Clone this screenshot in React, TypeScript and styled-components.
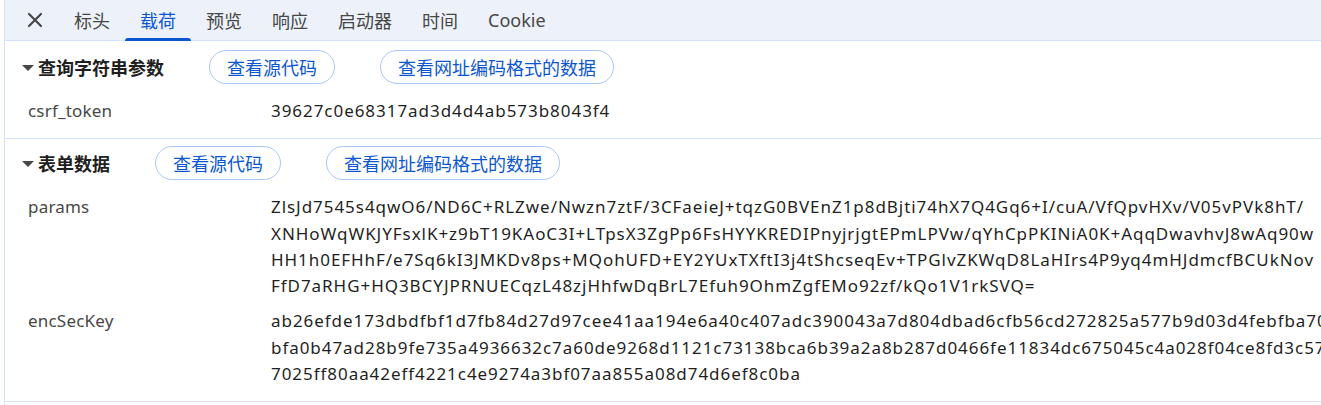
import React from 'react';
import styled, { createGlobalStyle } from 'styled-components';

const GlobalStyle = createGlobalStyle`
  html, body {
    margin: 0;
    padding: 0;
    background: #ffffff;
    overflow: hidden;
  }
  body {
    font-family: "Noto Sans", "Noto Sans CJK SC", sans-serif;
    color: #1f1f1f;
  }
`;

interface Param {
  name: string;
  lines: string[];
}

interface Section {
  title: string;
  params: Param[];
}

const sections: Section[] = [
  {
    title: '查询字符串参数',
    params: [{ name: 'csrf_token', lines: ['39627c0e68317ad3d4d4ab573b8043f4'] }],
  },
  {
    title: '表单数据',
    params: [
      {
        name: 'params',
        lines: [
          'ZlsJd7545s4qwO6/ND6C+RLZwe/Nwzn7ztF/3CFaeieJ+tqzG0BVEnZ1p8dBjti74hX7Q4Gq6+I/cuA/VfQpvHXv/V05vPVk8hT/',
          'XNHoWqWKJYFsxlK+z9bT19KAoC3I+LTpsX3ZgPp6FsHYYKREDIPnyjrjgtEPmLPVw/qYhCpPKINiA0K+AqqDwavhvJ8wAq90w',
          'HH1h0EFHhF/e7Sq6kI3JMKDv8ps+MQohUFD+EY2YUxTXftI3j4tShcseqEv+TPGlvZKWqD8LaHIrs4P9yq4mHJdmcfBCUkNov',
          'FfD7aRHG+HQ3BCYJPRNUECqzL48zjHhfwDqBrL7Efuh9OhmZgfEMo92zf/kQo1V1rkSVQ=',
        ],
      },
      {
        name: 'encSecKey',
        lines: [
          'ab26efde173dbdfbf1d7fb84d27d97cee41aa194e6a40c407adc390043a7d804dbad6cfb56cd272825a577b9d03d4febfba705',
          'bfa0b47ad28b9fe735a4936632c7a60de9268d1121c73138bca6b39a2a8b287d0466fe11834dc675045c4a028f04ce8fd3c57b',
          '7025ff80aa42eff4221c4e9274a3bf07aa855a08d74d6ef8c0ba',
        ],
      },
    ],
  },
];

const tabs = ['标头', '载荷', '预览', '响应', '启动器', '时间', 'Cookie'];

const Panel = styled.div`
  margin-left: 4px;
  border-left: 1px solid #d3e3fd;
  height: 405px;
  overflow: hidden;
`;

const TabBar = styled.div`
  display: flex;
  align-items: stretch;
  height: 40px;
  background: #edf2fa;
  border-bottom: 1px solid #d3e3fd;
  padding-left: 15px;
`;

const CloseButton = styled.div`
  display: flex;
  align-items: center;
  justify-content: center;
  box-sizing: border-box;
  width: 39px;
  padding-right: 9px;
`;

const Tab = styled.div<{ $active?: boolean }>`
  position: relative;
  display: flex;
  align-items: center;
  padding: 0 15px;
  font-size: 18px;
  color: ${p => (p.$active ? '#0b57d0' : '#474747')};

  &::after {
    content: '';
    display: ${p => (p.$active ? 'block' : 'none')};
    position: absolute;
    left: 0;
    right: 0;
    bottom: -1px;
    height: 3px;
    border-radius: 3px 3px 0 0;
    background: #0b57d0;
  }
`;

const SectionBox = styled.section<{ $first?: boolean }>`
  border-bottom: 1px solid #d3e3fd;
  padding: ${p => (p.$first ? '9px' : '7px')} 0 14px 0;
`;

const SectionHeader = styled.div`
  display: flex;
  align-items: center;
  gap: 45px;
  padding-left: 17px;
  height: 34px;
`;

const SectionTitle = styled.div`
  display: flex;
  align-items: center;
  gap: 4px;
  font-size: 18px;
  font-weight: 700;
  color: #1f1f1f;
`;

const Caret = styled.span`
  width: 0;
  height: 0;
  border-left: 6px solid transparent;
  border-right: 6px solid transparent;
  border-top: 6px solid #474747;
  margin-top: 2px;
`;

const PillButton = styled.button`
  height: 34px;
  padding: 0 17px;
  border: 1px solid #a8c7fa;
  border-radius: 17px;
  background: #ffffff;
  color: #0b57d0;
  font-family: inherit;
  font-size: 18px;
  cursor: pointer;
`;

const Rows = styled.div`
  display: flex;
  flex-direction: column;
  gap: 9px;
  margin-top: 14px;
`;

const Row = styled.div`
  display: grid;
  grid-template-columns: 243px 1fr;
  padding-left: 23px;
  font-size: 17px;
  letter-spacing: 0.95px;
  line-height: 26.3px;
`;

const Name = styled.div`
  color: #474747;
  letter-spacing: 0.2px;
`;

const Value = styled.div`
  color: #1f1f1f;
  white-space: nowrap;
  overflow: hidden;
`;

const Line = styled.div``;

const CloseIcon = () => (
  <svg width="16" height="16" viewBox="0 0 16 16" fill="none">
    <path d="M2 2L14 14M14 2L2 14" stroke="#474747" strokeWidth="2.2" strokeLinecap="round" />
  </svg>
);

export default function App() {
  return (
    <>
      <GlobalStyle />
      <Panel>
        <TabBar>
          <CloseButton>
            <CloseIcon />
          </CloseButton>
          {tabs.map(t => (
            <Tab key={t} $active={t === '载荷'}>
              {t}
            </Tab>
          ))}
        </TabBar>
        {sections.map((s, i) => (
          <SectionBox key={s.title} $first={i === 0}>
            <SectionHeader>
              <SectionTitle>
                <Caret />
                {s.title}
              </SectionTitle>
              <PillButton>查看源代码</PillButton>
              <PillButton>查看网址编码格式的数据</PillButton>
            </SectionHeader>
            <Rows>
              {s.params.map(p => (
                <Row key={p.name}>
                  <Name>{p.name}</Name>
                  <Value>
                    {p.lines.map((l, j) => (
                      <Line key={j}>{l}</Line>
                    ))}
                  </Value>
                </Row>
              ))}
            </Rows>
          </SectionBox>
        ))}
      </Panel>
    </>
  );
}
